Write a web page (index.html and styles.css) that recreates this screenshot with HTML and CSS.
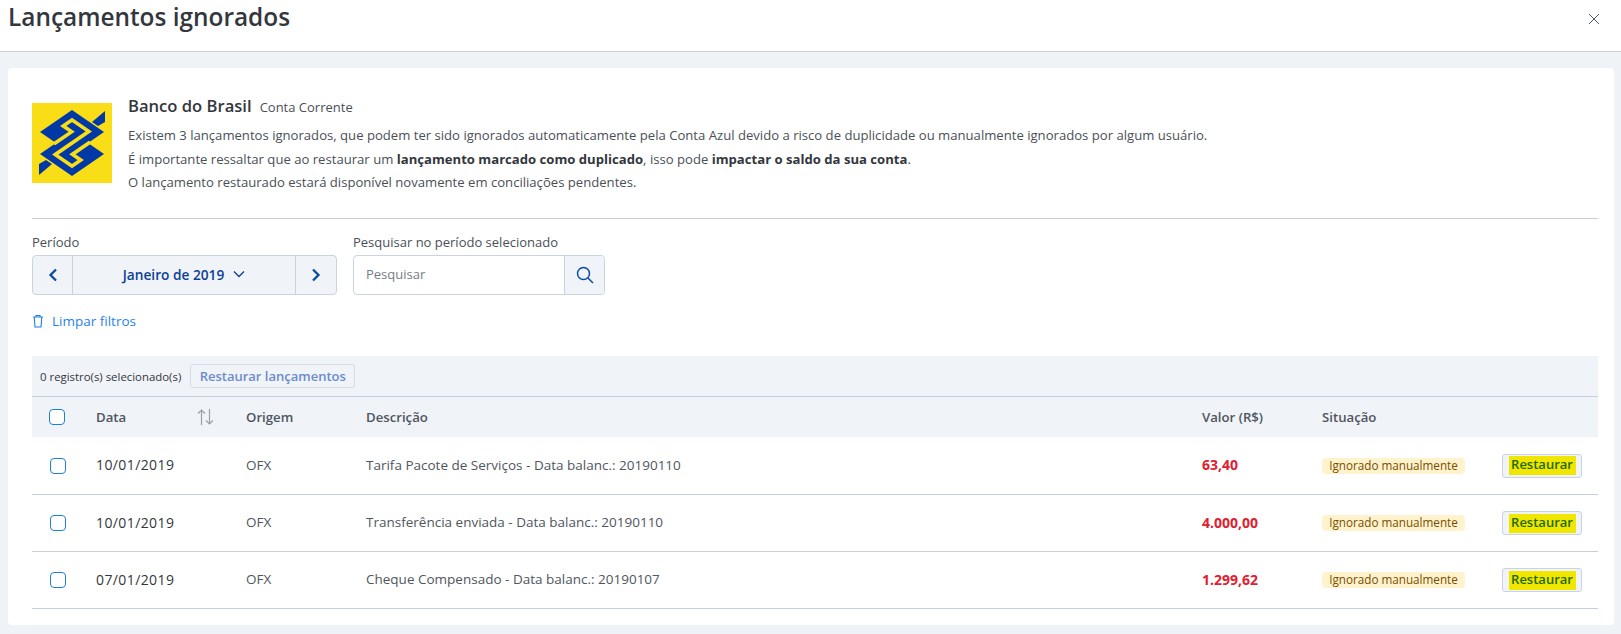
FILE: index.html
```html
<!DOCTYPE html>
<html lang="pt-BR">
<head>
<meta charset="utf-8">
<title>Lançamentos ignorados</title>
<link rel="stylesheet" href="styles.css">
</head>
<body>
<header class="top">
  <h1 class="title">Lançamentos ignorados</h1>
  <button class="close" aria-label="Fechar">
    <svg width="12" height="12" viewBox="0 0 12 12"><path d="M1 1l10 10M11 1L1 11" stroke="#555b63" stroke-width="1" fill="none"/></svg>
  </button>
</header>
<main class="card">
  <section class="intro">
    <svg class="logo" width="80" height="80" viewBox="0 0 80 80">
      <rect width="80" height="80" fill="#f9dd16"/>
      <g transform="matrix(4 -2.75 4 2.75 40 40)">
        <polygon points="-2,-6 6,-6 6,2 2,2 2,6 -6,6 -6,-2 -2,-2" fill="#0039a6"/>
        <polyline points="-2.5,-2.1 2,-2.1 2,-4.2 4.2,-4.2 4.2,0 -4.2,0 -4.2,4.2 -2,4.2 -2,2.1 2.5,2.1" fill="none" stroke="#f9dd16" stroke-width="0.8"/>
      </g>
      <polygon points="60,19 73,8 73,19 66,23" fill="#0039a6"/>
      <polygon points="20,61 7,72 7,61 14,57" fill="#0039a6"/>
    </svg>
    <div class="intro-text">
      <div class="bank"><strong class="bank-name">Banco do Brasil</strong><span class="bank-type">Conta Corrente</span></div>
      <p class="line">Existem 3 lançamentos ignorados, que podem ter sido ignorados automaticamente pela Conta Azul devido a risco de duplicidade ou manualmente ignorados por algum usuário.</p>
      <p class="line">É importante ressaltar que ao restaurar um <b>lançamento marcado como duplicado</b>, isso pode <b>impactar o saldo da sua conta</b>.</p>
      <p class="line">O lançamento restaurado estará disponível novamente em conciliações pendentes.</p>
    </div>
  </section>
  <hr class="divider">
  <section class="filters">
    <div class="field">
      <label class="label">Período</label>
      <div class="period">
        <button class="arrow"><svg width="10" height="14" viewBox="0 0 10 14"><path d="M8 1.500L2.500 7 8 12.500" fill="none" stroke="#0d4aa5" stroke-width="2.300"/></svg></button>
        <button class="month">Janeiro de 2019
          <svg width="12" height="8" viewBox="0 0 12 8"><path d="M1 1.500l5 5 5-5" fill="none" stroke="#0d3f97" stroke-width="1.300"/></svg>
        </button>
        <button class="arrow arrow-right"><svg width="10" height="14" viewBox="0 0 10 14"><path d="M2 1.500L7.500 7 2 12.500" fill="none" stroke="#0d4aa5" stroke-width="2.300"/></svg></button>
      </div>
    </div>
    <div class="field">
      <label class="label">Pesquisar no período selecionado</label>
      <div class="search">
        <span class="search-input">Pesquisar</span>
        <button class="search-btn"><svg width="18" height="18" viewBox="0 0 18 18"><circle cx="7.500" cy="7.500" r="6" fill="none" stroke="#0d4aa5" stroke-width="1.500"/><path d="M12 12l5 5" stroke="#0d4aa5" stroke-width="1.500"/></svg></button>
      </div>
    </div>
  </section>
  <a class="clear"><svg width="12" height="14" viewBox="0 0 12 14"><path d="M1 3h10M4 3V1.500h4V3M2.200 3l.8 10h6l.8-10" fill="none" stroke="#1f7fe0" stroke-width="1.100"/></svg>Limpar filtros</a>
  <section class="table">
    <div class="toolbar"><span class="count">0 registro(s) selecionado(s)</span><button class="bulk">Restaurar lançamentos</button></div>
    <div class="row head">
      <span class="check check-head"></span>
      <span class="data-head">Data
        <svg width="17" height="18" viewBox="0 0 17 18"><path d="M4.500 17V2M1 5.500L4.500 2 8 5.500" fill="none" stroke="#9aa1aa" stroke-width="1.200"/><path d="M12.500 1v15M9 12.500l3.500 3.500 3.500-3.500" fill="none" stroke="#9aa1aa" stroke-width="1.200"/></svg>
      </span>
      <span>Origem</span><span>Descrição</span><span>Valor (R$)</span><span>Situação</span><span></span>
    </div>
    <div class="row">
      <span class="check"></span><span class="date">10/01/2019</span><span class="cell">OFX</span>
      <span class="cell">Tarifa Pacote de Serviços - Data balanc.: 20190110</span>
      <span class="value">63,40</span><span class="badge-cell"><span class="badge">Ignorado manualmente</span></span>
      <button class="restore"><mark class="hl">Restaurar</mark></button>
    </div>
    <div class="row">
      <span class="check"></span><span class="date">10/01/2019</span><span class="cell">OFX</span>
      <span class="cell">Transferência enviada - Data balanc.: 20190110</span>
      <span class="value">4.000,00</span><span class="badge-cell"><span class="badge">Ignorado manualmente</span></span>
      <button class="restore"><mark class="hl">Restaurar</mark></button>
    </div>
    <div class="row">
      <span class="check"></span><span class="date">07/01/2019</span><span class="cell">OFX</span>
      <span class="cell">Cheque Compensado - Data balanc.: 20190107</span>
      <span class="value">1.299,62</span><span class="badge-cell"><span class="badge">Ignorado manualmente</span></span>
      <button class="restore"><mark class="hl">Restaurar</mark></button>
    </div>
  </section>
</main>
</body>
</html>
```
FILE: styles.css
```css
* { box-sizing: border-box; }
html, body { margin: 0; height: 634px; overflow: hidden; }
body { background: #eff2f7; font-family: "Open Sans", "Noto Sans", sans-serif; color: #4a4f57; font-size: 13px; }
button { font-family: inherit; cursor: pointer; }
.top { height: 52px; background: #fff; border-bottom: 1px solid #c9d0da; display: flex; align-items: flex-start; justify-content: space-between; padding: 0 21px 0 8px; }
.title { margin: -1px 0 0; font-size: 24.4px; line-height: 36px; font-weight: 600; color: #33373d; }
.close { border: 0; background: none; padding: 0; margin-top: 13px; width: 12px; height: 12px; display: flex; }
.card { margin: 16px 7px 0 8px; height: 557px; background: #fff; border-radius: 4px; padding: 35px 16px 0 24px; }
.intro { display: flex; gap: 16px; height: 115px; }
.logo { flex: none; }
.bank { display: flex; align-items: baseline; gap: 8px; height: 16px; line-height: 16px; margin: -5px 0 10px; }
.bank-name { font-size: 16.6px; font-weight: 600; color: #33373d; }
.bank-type { font-size: 13px; color: #4a4f57; }
.line { margin: 0; font-size: 13.11px; line-height: 23.5px; color: #4a4f57; }
.line b { font-weight: 700; color: #33373d; }
.divider { margin: 0; border: 0; border-top: 1px solid #c9d0da; }
.filters { display: flex; gap: 16px; margin-top: 14px; }
.field { display: flex; flex-direction: column; }
.label { font-size: 13px; line-height: 19px; margin-bottom: 3px; color: #4a4f57; }
.period { display: flex; width: 305px; height: 40px; border: 1px solid #c9d3e2; border-radius: 4px; background: #f0f3f8; overflow: hidden; }
.arrow { width: 39px; flex: none; border: 0; background: none; padding: 0; display: flex; align-items: center; justify-content: center; }
.arrow-right { width: 40px; }
.month { flex: 1; border: 0; border-left: 1px solid #c9d3e2; border-right: 1px solid #c9d3e2; background: none; color: #0d3f97; font-size: 13.7px; font-weight: 600; display: flex; align-items: center; justify-content: center; gap: 9px; padding: 0 0 2px; }
.search { display: flex; width: 252px; height: 40px; border: 1px solid #c9d3e2; border-radius: 4px; overflow: hidden; }
.search-input { flex: 1; padding-left: 12px; line-height: 36px; font-size: 13px; color: #767c85; }
.search-btn { width: 40px; border: 0; border-left: 1px solid #c9d3e2; background: #f0f3f8; padding: 0; display: flex; align-items: center; justify-content: center; }
.clear { display: flex; align-items: center; gap: 8px; margin-top: 16px; height: 20px; color: #2a82e8; font-size: 13.5px; }
.table { margin-top: 25px; }
.toolbar { height: 41px; background: #f0f3f8; border-bottom: 1px solid #c4d0e0; display: flex; align-items: center; gap: 9px; padding-left: 8px; }
.count { font-size: 11.4px; color: #33373d; }
.bulk { height: 24px; width: 165px; padding: 0; border: 1px solid #d5dde8; border-radius: 3px; background: #f0f3f8; color: #6b8ccb; font-size: 13px; font-weight: 600; }
.row { display: grid; grid-template-columns: 64px 150px 120px 836px 120px 180px 80px; align-items: center; height: 57px; border-bottom: 1px solid #c4d0e0; font-size: 13.5px; }
.head { height: 40px; background: #f0f3f8; border-bottom: 0; font-size: 13.2px; font-weight: 600; color: #4f5660; }
.head + .row { height: 58px; }
.check { width: 16px; height: 16px; margin-left: 18px; border: 1.5px solid #1f7fe0; border-radius: 4px; background: #fff; }
.check-head { margin-left: 17px; }
.data-head { display: flex; align-items: center; justify-content: space-between; padding-right: 32px; }
.date { color: #33373d; font-size: 14px; letter-spacing: 0.4px; margin-bottom: 2px; }
.cell { color: #4f5660; margin-bottom: 2px; }
.value { color: #e0202e; font-weight: 700; font-size: 14px; margin-bottom: 2px; }
.badge-cell { display: flex; }
.badge { height: 16px; line-height: 15px; width: 143px; text-align: center; border-radius: 4px; background: #fff3cd; color: #7a4d00; font-size: 11.7px; }
.restore { width: 80px; height: 24px; padding: 0; border: 1px solid #c9d3e2; border-radius: 3px; background: #f0f3f8; display: flex; align-items: center; justify-content: center; font-size: 13px; font-weight: 600; }
.hl { background: #f0e600; color: #1d6a00; display: block; width: 67px; height: 19px; line-height: 17px; }
```
